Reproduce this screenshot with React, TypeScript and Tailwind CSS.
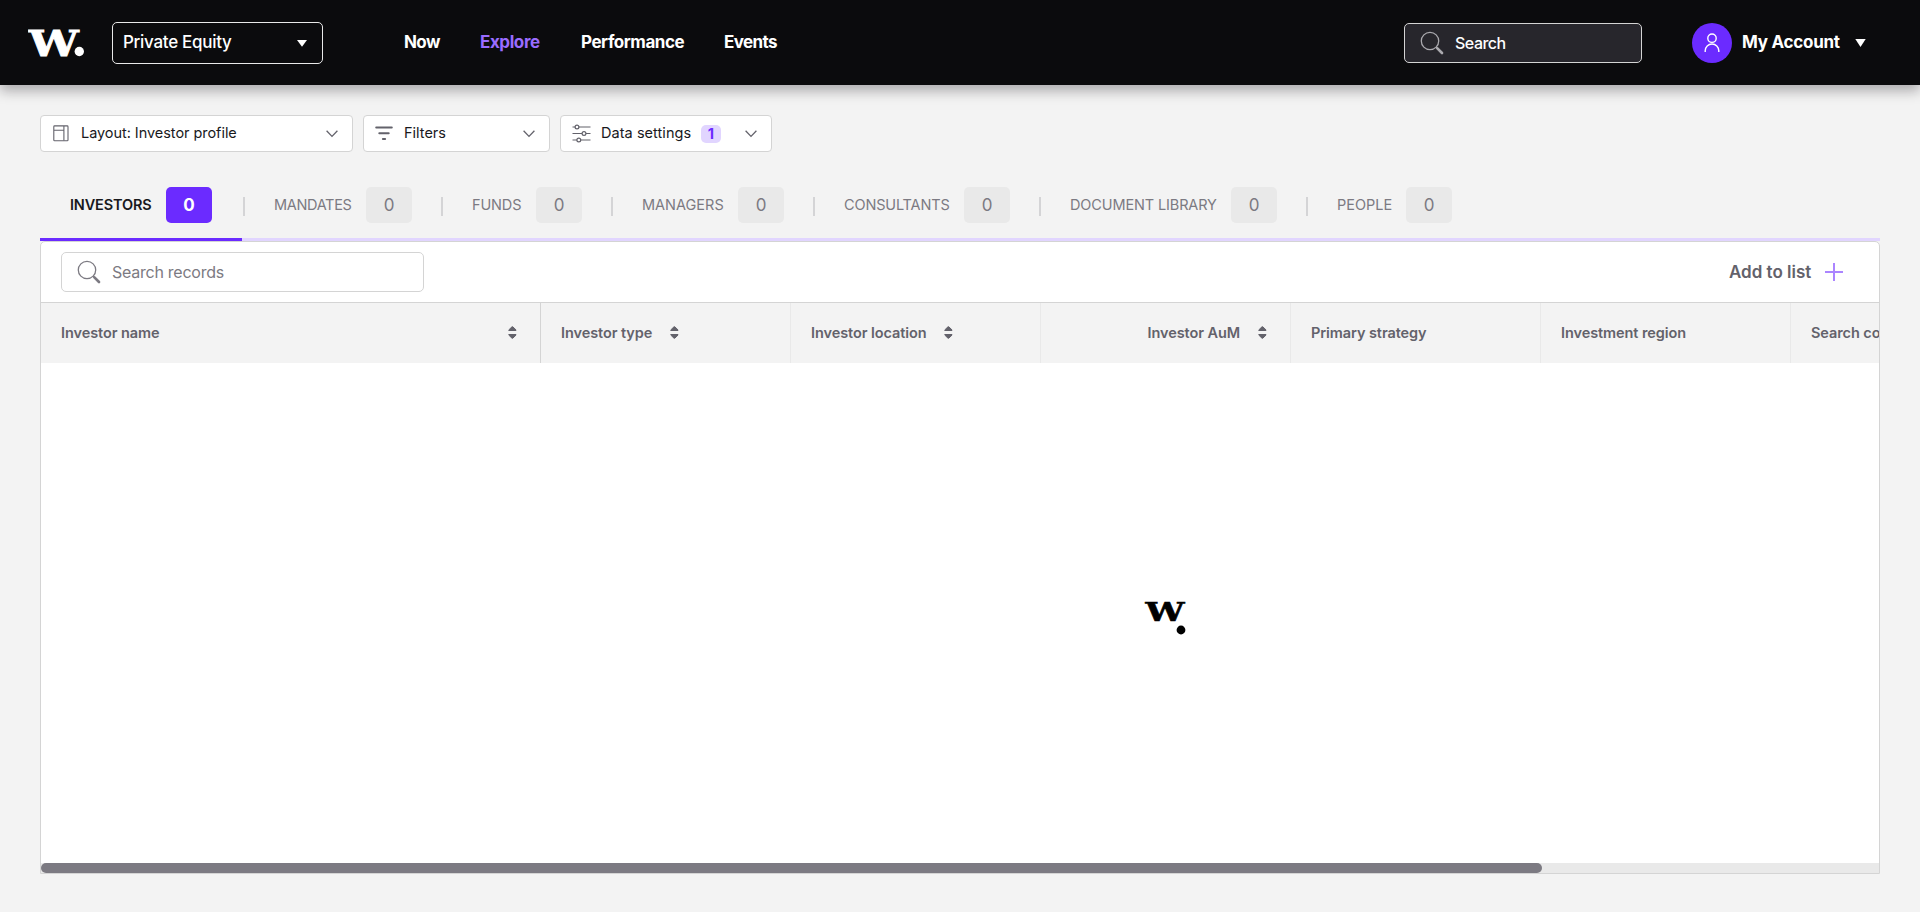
import React from "react";

const tabs = [
  { label: "INVESTORS", labelWidth: "w-[96px]", tracking: "tracking-[-0.15px]", pad: "pl-[30px]", active: true },
  { label: "MANDATES", labelWidth: "w-[92px]", tracking: "tracking-[-0.33px]", pad: "pl-[62px]" },
  { label: "FUNDS", labelWidth: "w-[64px]", tracking: "tracking-[-0.15px]", pad: "pl-[60px]" },
  { label: "MANAGERS", labelWidth: "w-[96px]", tracking: "tracking-[0px]", pad: "pl-[60px]" },
  { label: "CONSULTANTS", labelWidth: "w-[120px]", tracking: "tracking-[-0.15px]", pad: "pl-[60px]" },
  { label: "DOCUMENT LIBRARY", labelWidth: "w-[161px]", tracking: "tracking-[-0.13px]", pad: "pl-[60px]" },
  { label: "PEOPLE", labelWidth: "w-[69px]", tracking: "tracking-[0px]", pad: "pl-[60px]" },
];

function Logo() {
  return (
    <svg width="60" height="44" viewBox="0 -7 60 44" className="shrink-0" aria-label="W.">
      <text x="0.8" y="27.5" fill="#fff" stroke="#fff" strokeWidth="0.8" fontFamily="DejaVu Serif" fontWeight="700" fontSize="35" textLength="50" lengthAdjust="spacingAndGlyphs">W</text>
      <circle cx="51.3" cy="23.5" r="4.7" fill="#fff" />
    </svg>
  );
}

function Loader() {
  return (
    <svg width="44" height="50" viewBox="0 -10 44 50" aria-label="Loading">
      <text x="2.5" y="23.3" fill="#000" stroke="#000" strokeWidth="0.6" fontFamily="DejaVu Serif" fontWeight="700" fontSize="26" textLength="39" lengthAdjust="spacingAndGlyphs">W</text>
      <circle cx="38" cy="32" r="4.4" fill="#000" />
    </svg>
  );
}

function Magnifier({ color }: { color: string }) {
  return (
    <svg width="24" height="24" viewBox="0 0 24 24" fill="none" stroke={color} className="shrink-0">
      <circle cx="10" cy="10" r="8.7" strokeWidth="1.3" />
      <path d="M16.2 16.2l1.3 1.3" strokeWidth="1.4" />
      <path d="M17.4 17.4l4.6 4.6" strokeWidth="2.7" strokeLinecap="round" />
    </svg>
  );
}

function Chevron() {
  return (
    <svg width="12" height="8" viewBox="0 0 12 8" fill="none" stroke="#63626b" strokeWidth="1.3" className="shrink-0">
      <path d="M0.6 0.8L6 6.4l5.4-5.6" />
    </svg>
  );
}

function LayoutIcon() {
  return (
    <svg width="16" height="17" viewBox="0 0 16 17" fill="none" stroke="#63626b" strokeWidth="1.1" className="shrink-0">
      <rect x="0.8" y="0.9" width="14.2" height="14.8" rx="0.8" />
      <path d="M10.9 1v14.6M1 5.3h9.9" />
    </svg>
  );
}

function FilterIcon() {
  return (
    <svg width="18" height="15" viewBox="0 0 18 15" fill="none" stroke="#63626b" strokeWidth="2" strokeLinecap="round" className="shrink-0">
      <path d="M1.2 1.6h15.6M4.3 7.3h9.4M7.9 13h2.2" />
    </svg>
  );
}

function SlidersIcon() {
  return (
    <svg width="19" height="19" viewBox="0 0 19 19" fill="#fff" stroke="#63626b" strokeWidth="1.2" className="shrink-0">
      <path d="M0.5 3h18M0.5 9.5h18M0.5 16h18" />
      <circle cx="5" cy="3" r="1.9" />
      <circle cx="12" cy="9.5" r="1.9" />
      <circle cx="6.8" cy="16" r="1.9" />
    </svg>
  );
}

function SortIcon() {
  return (
    <svg width="9" height="13" viewBox="0 0 9 13" fill="#63626b" stroke="#63626b" strokeWidth="1" strokeLinejoin="round" className="mb-[2px] shrink-0">
      <path d="M0.8 4.5v-.6L4 0.8h.8L8 3.9v.6z" />
      <path d="M0.8 8.5v.6l3.2 3.1h.8l3.2-3.1v-.6z" />
    </svg>
  );
}

function Header() {
  return (
    <header className="relative flex h-[85px] shrink-0 bg-[#0b0b0d] text-white shadow-[0_6px_12px_rgba(11,5,13,0.3)]">
      <div className="flex w-28 pt-[21px] pl-[28px]">
        <Logo />
      </div>
      <button className="mt-[22px] flex h-[42px] w-[211px] items-center justify-between rounded-[5px] border border-[#e9e9e9] pr-[15px] pl-[10px] text-[17px] font-medium">
        <span className="tracking-[-0.29px]">Private Equity</span>
        <svg width="10" height="7" viewBox="0 0 10 7" fill="#fff" className="mt-px"><path d="M0 0h10L5 6.7z" /></svg>
      </button>
      <nav className="ml-[81px] flex pt-[30px] text-[17px] leading-6 font-bold">
        <a className="w-[76px] tracking-[-0.6px]">Now</a>
        <a className="w-[101px] tracking-[-0.41px] text-[#9a6cff]">Explore</a>
        <a className="w-[143px] tracking-[-0.46px]">Performance</a>
        <a className="tracking-[-0.6px]">Events</a>
      </nav>
      <div className="mt-[23px] ml-auto flex h-10 w-[238px] shrink-0 items-center rounded-[5px] border border-[#d4d4d4] bg-[#27262c] pl-[15px]">
        <Magnifier color="#aaa9ae" />
        <span className="ml-[11px] text-base font-medium tracking-[-0.5px]">Search</span>
      </div>
      <div className="mt-[23px] mr-[54px] ml-[50px] flex h-10 shrink-0 items-center">
        <span className="flex size-10 items-center justify-center rounded-full bg-[#6b2bff]">
          <svg width="16" height="20" viewBox="0 0 16 20" fill="none" stroke="#fff" strokeWidth="1.4">
            <circle cx="8" cy="5.2" r="4.2" />
            <path d="M1.2 19v-1.2a6.8 6.8 0 0 1 13.6 0V19" />
          </svg>
        </span>
        <span className="ml-[10px] w-[113px] text-[17px] font-bold tracking-[-0.26px]">My Account</span>
        <svg width="11" height="8" viewBox="0 0 11 8" fill="#fff"><path d="M0.3 0h10.4L5.5 8z" /></svg>
      </div>
    </header>
  );
}

function Toolbar() {
  const button = "flex h-[37px] items-center rounded-[4px] border border-[#d4d4d4] bg-white text-[14.5px] text-[#19191d]";
  return (
    <div className="mt-[30px] ml-10 flex gap-[10px]">
      <button className={button + " w-[313px] pr-[14px] pl-3"}>
        <LayoutIcon />
        <span className="ml-3 pb-[2px] tracking-[-0.05px]">Layout: Investor profile</span>
        <span className="ml-auto"><Chevron /></span>
      </button>
      <button className={button + " w-[187px] pr-[14px] pl-[11px]"}>
        <FilterIcon />
        <span className="ml-[11px] pb-[2px]">Filters</span>
        <span className="ml-auto"><Chevron /></span>
      </button>
      <button className={button + " w-[212px] pr-[14px] pl-[11px]"}>
        <SlidersIcon />
        <span className="ml-[10px] w-[100px] pb-[2px] text-left tracking-[0.05px]">Data settings</span>
        <span className="flex h-[18px] w-5 items-center justify-center rounded-[5px] bg-[#e1d5ff] font-bold text-[#6b2bff]">1</span>
        <span className="ml-auto"><Chevron /></span>
      </button>
    </div>
  );
}

function Tabs() {
  return (
    <div className="mt-[35px] flex h-[51px] pl-10">
      {tabs.map((t, i) => (
        <div key={t.label} className={"relative flex h-9 items-center " + t.pad}>
          {i > 0 && (
            <span className={"absolute top-[10px] h-[19px] w-[2px] bg-[#d4d4d6] " + (i === 1 ? "left-[31px]" : "left-[29px]")} />
          )}
          <span className={"pb-px text-[14.5px] whitespace-nowrap " + t.labelWidth + " " + t.tracking + (t.active ? " font-semibold text-[#19191d]" : " text-[#7c7a82]")}>
            {t.label}
          </span>
          <span className={"flex h-9 w-[46px] items-center justify-center rounded-[5px] pt-px text-[17px] " + (t.active ? "bg-[#6b2bff] font-bold text-white" : "bg-[#e9e9e9] text-[#7c7a82]")}>
            0
          </span>
        </div>
      ))}
    </div>
  );
}

function TableHead() {
  return (
    <div className="flex h-[61px] shrink-0 overflow-hidden border-t border-[#d4d4d4] bg-[#f3f3f3] text-[14.5px] font-semibold tracking-[-0.08px] whitespace-nowrap text-[#63626b]">
      <div className="flex w-[500px] shrink-0 items-center justify-between border-r border-[#d4d4d4] pr-[23px] pl-5">
        <span>Investor name</span>
        <SortIcon />
      </div>
      <div className="flex w-[250px] shrink-0 items-center border-r border-[#e9e9e9] pl-5">
        <span className="w-[109px]">Investor type</span>
        <SortIcon />
      </div>
      <div className="flex w-[250px] shrink-0 items-center border-r border-[#e9e9e9] pl-5">
        <span className="w-[133px]">Investor location</span>
        <SortIcon />
      </div>
      <div className="flex w-[250px] shrink-0 items-center justify-end border-r border-[#e9e9e9] pr-[23px]">
        <span className="mr-[18px]">Investor AuM</span>
        <SortIcon />
      </div>
      <div className="flex w-[250px] shrink-0 items-center border-r border-[#e9e9e9] pl-5">
        <span>Primary strategy</span>
      </div>
      <div className="flex w-[250px] shrink-0 items-center border-r border-[#e9e9e9] pl-5">
        <span>Investment region</span>
      </div>
      <div className="flex w-[88px] shrink-0 items-center overflow-hidden pl-5">
        <span>Search consultant</span>
      </div>
    </div>
  );
}

export default function App() {
  return (
    <div className="flex h-[912px] w-[1920px] flex-col overflow-hidden bg-[#f3f3f3] font-[Inter,sans-serif]">
      <Header />
      <Toolbar />
      <Tabs />
      <main className="mx-10 flex flex-col">
        <div className="h-[3px] bg-[#e1d5ff]">
          <div className="h-[3px] w-[202px] bg-[#6b2bff]" />
        </div>
        <div className="flex h-[633px] flex-col overflow-hidden rounded-t-[5px] border border-[#d4d4d4] bg-white">
          <div className="flex h-[60px] shrink-0 items-start justify-between pt-[10px] pr-9 pl-5">
            <div className="flex h-10 w-[363px] items-center rounded-[5px] border border-[#d4d4d4] pl-[15px]">
              <Magnifier color="#7c7a82" />
              <span className="ml-[11px] text-base tracking-[-0.25px] text-[#7c7a82]">Search records</span>
            </div>
            <button className="flex h-10 items-center text-[17px] font-semibold text-[#63626b]">
              <span className="w-[96px] pt-px text-left">Add to list</span>
              <svg width="18" height="18" viewBox="0 0 18 18" stroke="#ab85ff" strokeWidth="2"><path d="M9 0v18M0 9h18" /></svg>
            </button>
          </div>
          <TableHead />
          <div className="flex flex-1 pt-[225px] pl-[1102px]">
            <Loader />
          </div>
          <div className="h-[10px] shrink-0 bg-[#e9e9e9]">
            <div className="h-[10px] w-[1501px] rounded-full bg-[#7c7a82]" />
          </div>
        </div>
      </main>
    </div>
  );
}
